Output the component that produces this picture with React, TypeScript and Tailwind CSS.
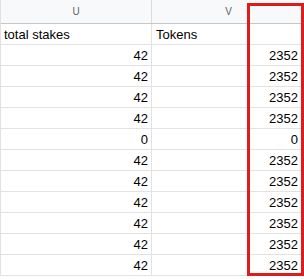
import React from "react";

const rows: [string, string][] = [
  ["total stakes", "Tokens"],
  ["42", "2352"],
  ["42", "2352"],
  ["42", "2352"],
  ["42", "2352"],
  ["0", "0"],
  ["42", "2352"],
  ["42", "2352"],
  ["42", "2352"],
  ["42", "2352"],
  ["42", "2352"],
  ["42", "2352"],
];

export default function App() {
  return (
    <div
      className="relative w-[304px] h-[279px] overflow-hidden bg-white text-[13px] text-black"
      style={{ fontFamily: '"Liberation Sans", Arial, sans-serif' }}
    >
      <div className="flex flex-col border-l border-[#e1e1e1] w-[304px]">
        <div className="flex h-[24px] bg-[#f8f9fa] border-b border-[#c4c7c5] text-[10px] text-[#5f6368]">
          <div className="w-[151px] border-r border-[#dadce0] flex items-center justify-center">U</div>
          <div className="flex-1 flex items-center justify-center pl-[1px]">V</div>
        </div>
        {rows.map((r, i) => {
          const isText = i === 0;
          return (
            <div key={i} className="flex h-[21px] border-b border-[#e2e2e2]">
              <div
                className={`w-[151px] border-r border-[#e2e2e2] pl-[3px] pr-[3px] leading-[21px] overflow-hidden whitespace-nowrap ${
                  isText ? "text-left" : "text-right"
                }`}
              >
                {r[0]}
              </div>
              <div
                className={`flex-1 pl-[4px] pr-[6px] leading-[21px] overflow-hidden whitespace-nowrap ${
                  isText ? "text-left" : "text-right"
                }`}
              >
                {r[1]}
              </div>
            </div>
          );
        })}
      </div>
      <div className="absolute left-[247px] top-[3px] w-[57px] h-[273px] border-[3px] border-[#e01b1b]" />
    </div>
  );
}
